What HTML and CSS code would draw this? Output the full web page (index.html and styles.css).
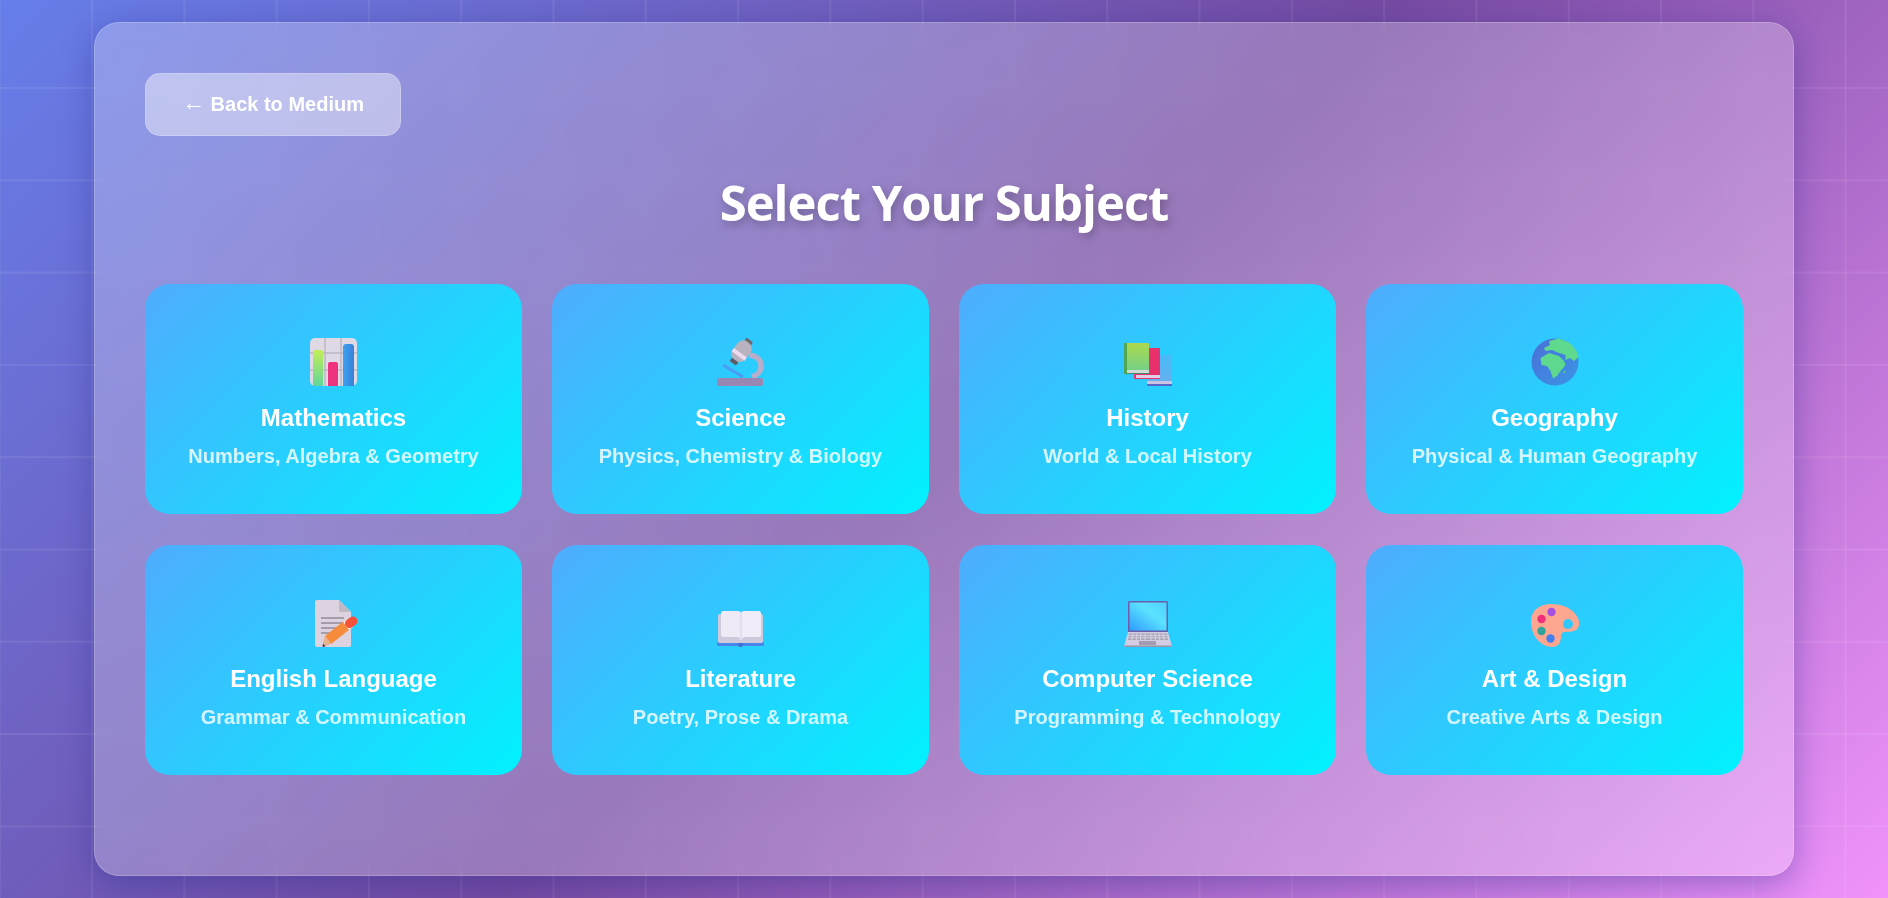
FILE: index.html
```html
<!DOCTYPE html>
<html lang="en">
<head>
    <meta charset="UTF-8">
    <title>Select Your Subject</title>
    <link rel="stylesheet" href="styles.css">
</head>
<body>
    <main class="container">
        <a href="#" class="back-button"><span class="arrow">←</span> Back to Medium</a>
        <h1>Select Your Subject</h1>

        <div class="subject-grid">
            <a href="#" class="subject-card">
                <svg class="subject-icon" viewBox="0 0 48 48">
                    <defs>
                        <linearGradient id="barGreen" x1="0" y1="0" x2="0" y2="1"><stop offset="0" stop-color="#c3ee57"/><stop offset="1" stop-color="#62d69a"/></linearGradient>
                        <linearGradient id="barPink" x1="0" y1="0" x2="0" y2="1"><stop offset="0" stop-color="#f0327c"/><stop offset="1" stop-color="#e8357f"/></linearGradient>
                        <linearGradient id="barBlue" x1="0" y1="0" x2="1" y2="0"><stop offset="0" stop-color="#3aa2f2"/><stop offset="1" stop-color="#3a7fd8"/></linearGradient>
                    </defs>
                    <rect x="0" y="0" width="47" height="48" rx="5" fill="#ded9e4"/>
                    <path d="M15 0V48M31 0V48M0 15H47M0 32H47" stroke="#bcb6c2" stroke-width="1.4" fill="none"/>
                    <path d="M3 14a2 2 0 0 1 2-2h6a2 2 0 0 1 2 2V48H3Z" fill="url(#barGreen)"/>
                    <path d="M18 26a2 2 0 0 1 2-2h6a2 2 0 0 1 2 2V48H18Z" fill="url(#barPink)"/>
                    <path d="M33 9a3 3 0 0 1 3-3h5a3 3 0 0 1 3 3V48H33Z" fill="url(#barBlue)"/>
                </svg>
                <h3>Mathematics</h3>
                <p>Numbers, Algebra &amp; Geometry</p>
            </a>

            <a href="#" class="subject-card">
                <svg class="subject-icon" viewBox="0 0 48 48">
                    <path d="M32 17C46 18 49 34 35 39" stroke="#b9aec9" stroke-width="5.500" fill="none"/>
                    <path d="M6 27L26 39" stroke="#4a9cf4" stroke-width="3"/>
                    <rect x="0" y="40" width="46" height="8" rx="2" fill="#9a86b2"/>
                    <g transform="rotate(36 24 14)">
                        <rect x="20" y="-1" width="8" height="5" rx="1" fill="#6e6a72"/>
                        <rect x="16" y="2" width="16" height="22" rx="7" fill="#b9b3bf"/>
                        <rect x="16" y="15" width="16" height="4" fill="#eedaf2"/>
                        <rect x="20" y="24" width="8" height="4" rx="1" fill="#5e5a66"/>
                    </g>
                </svg>
                <h3>Science</h3>
                <p>Physics, Chemistry &amp; Biology</p>
            </a>

            <a href="#" class="subject-card">
                <svg class="subject-icon" viewBox="0 0 48 48">
                    <defs>
                        <linearGradient id="bookGreen" x1="0" y1="0" x2="0" y2="1"><stop offset="0" stop-color="#add94c"/><stop offset="1" stop-color="#6dd08f"/></linearGradient>
                        <linearGradient id="bookBlue" x1="0" y1="0" x2="0" y2="1"><stop offset="0" stop-color="#48baf8"/><stop offset="1" stop-color="#6aaeee"/></linearGradient>
                    </defs>
                    <rect x="23" y="17" width="25" height="31" rx="1" fill="url(#bookBlue)"/>
                    <rect x="23" y="43" width="25" height="3" fill="#cbc3e2"/>
                    <rect x="23" y="46" width="25" height="2" fill="#5968c8"/>
                    <rect x="10" y="10" width="26" height="31" rx="1" fill="#e8306c"/>
                    <rect x="12" y="37" width="24" height="3" fill="#e0cfe6"/>
                    <rect x="0" y="5" width="25" height="31" rx="1" fill="url(#bookGreen)"/>
                    <rect x="0" y="5" width="3" height="31" fill="#52a552"/>
                    <rect x="3" y="32" width="22" height="3" fill="#d5d8d8"/>
                    <rect x="3" y="35" width="22" height="1" fill="#3f8f6a"/>
                </svg>
                <h3>History</h3>
                <p>World &amp; Local History</p>
            </a>

            <a href="#" class="subject-card">
                <svg class="subject-icon" viewBox="0 0 48 48">
                    <defs>
                        <linearGradient id="sea" x1="0" y1="0" x2="1" y2="1"><stop offset="0" stop-color="#4b6fd8"/><stop offset="1" stop-color="#3a95e6"/></linearGradient>
                    </defs>
                    <circle cx="24" cy="24" r="23.500" fill="url(#sea)"/>
                    <path d="M9.500 20L18 15L28 18L33 23L34.500 27L29.500 33L26 38L22 40.500L19.500 33L16 28L10.500 27Z" fill="#5fd98e"/>
                    <path d="M13 10L19 7L18 3L28 .6L38 4.500C43 9 46.500 13 47.500 19L43 23L39 20L34.500 22L34.500 17L28 15L21 12L14.500 13Z" fill="#5fd98e"/>
                    <circle cx="33.500" cy="34" r="1" fill="#5fd98e"/>
                </svg>
                <h3>Geography</h3>
                <p>Physical &amp; Human Geography</p>
            </a>

            <a href="#" class="subject-card">
                <svg class="subject-icon" viewBox="0 0 48 48">
                    <path d="M7 1H29L41 13V46a2 2 0 0 1-2 2H7a2 2 0 0 1-2-2V3a2 2 0 0 1 2-2Z" fill="#dcd2e0"/>
                    <path d="M29 1L41 13H31a2 2 0 0 1-2-2Z" fill="#bfb7c2"/>
                    <path d="M11 19H34M11 24H34M11 29H30M11 34H22" stroke="#928a98" stroke-width="1.600"/>
                    <path d="M18 41L37 26" stroke="#f58b3b" stroke-width="10"/>
                    <path d="M36 27L40 24" stroke="#f4ece8" stroke-width="10"/>
                    <path d="M39.500 24.500L43 22" stroke="#f4533a" stroke-width="9" stroke-linecap="round"/>
                    <path d="M14.500 37L21 45L12.500 48Z" fill="#e7b48e"/>
                    <path d="M13 44.500L15.500 47.200L12.500 48Z" fill="#4a2a5a"/>
                </svg>
                <h3>English Language</h3>
                <p>Grammar &amp; Communication</p>
            </a>

            <a href="#" class="subject-card">
                <svg class="subject-icon" viewBox="0 0 48 48">
                    <rect x="0" y="43" width="47" height="4" rx="1" fill="#4a86e8"/>
                    <rect x="21" y="43" width="5" height="5" rx="2" fill="#3f6fd0"/>
                    <rect x="1" y="15" width="45" height="29" rx="2" fill="#cfc9dc"/>
                    <path d="M6 12H21C23 12 24 13 24 15V41C23 39 22 38 20 38H6C5 38 4 37 4 36V14C4 13 5 12 6 12Z" fill="#efeaf6"/>
                    <path d="M42 12H27C25 12 24 13 24 15V41C25 39 26 38 28 38H42C43 38 44 37 44 36V14C44 13 43 12 42 12Z" fill="#f1edf8"/>
                    <path d="M24 15V41" stroke="#e3ddee" stroke-width="2.500"/>
                </svg>
                <h3>Literature</h3>
                <p>Poetry, Prose &amp; Drama</p>
            </a>

            <a href="#" class="subject-card">
                <svg class="subject-icon" viewBox="0 0 48 48">
                    <defs>
                        <linearGradient id="laptopScreen" x1="0" y1="1" x2="1" y2="0"><stop offset="0" stop-color="#2e9cff"/><stop offset=".6" stop-color="#5be2ff"/><stop offset="1" stop-color="#4fd0ff"/></linearGradient>
                    </defs>
                    <rect x="4" y="2" width="40" height="32" rx="1.500" fill="#6d5eaa"/>
                    <rect x="5.500" y="3.500" width="37" height="28" fill="url(#laptopScreen)"/>
                    <path d="M4 33H44L47.500 46V48H.5V46Z" fill="#d4cce3"/>
                    <path d="M.5 46.500H47.500V48H.5Z" fill="#9a92a8"/>
                    <path d="M5 34.500H43L44 41H4Z" fill="#aca4b9"/>
                    <path d="M5 36.500H43M4.500 38.800H43.500M9 34.500L8 41M13 34.500L12.500 41M17 34.500L16.500 41M21 34.500V41M27 34.500V41M31 34.500L31.500 41M35 34.500L35.500 41M39 34.500L40 41" stroke="#e0dae9" stroke-width=".8" fill="none"/>
                    <rect x="15" y="42" width="17" height="4" fill="#a39bb0"/>
                </svg>
                <h3>Computer Science</h3>
                <p>Programming &amp; Technology</p>
            </a>

            <a href="#" class="subject-card">
                <svg class="subject-icon" viewBox="0 0 48 48">
                    <path d="M0 21C1 10 10 5 20 5C33 5 45 11 48 22C49 28 46 32 40 32.500C35 33 30 32 30 37C30 44 27 48 21 48C10 48 -1 36 0 21Z" fill="#ffa690"/>
                    <circle cx="37" cy="25" r="5" fill="#2fc8ff"/>
                    <circle cx="20.500" cy="13" r="4.200" fill="#a74fe0"/>
                    <circle cx="10.500" cy="20" r="4.200" fill="#ef2f78"/>
                    <circle cx="10.500" cy="32" r="4.200" fill="#2fa39c"/>
                    <circle cx="19.500" cy="39.500" r="4.200" fill="#3f7ff0"/>
                </svg>
                <h3>Art &amp; Design</h3>
                <p>Creative Arts &amp; Design</p>
            </a>
        </div>
    </main>
</body>
</html>
```

FILE: styles.css
```css
* {
    box-sizing: border-box;
}
html {
    height: 100%;
}
body {
    margin: 0;
    height: 100%;
    padding: 22px 94px;
    overflow: hidden;
    font-family: "Liberation Sans", Arial, sans-serif;
    color: white;
    background-color: #764ba2;
    background-image:
        linear-gradient(to right, rgba(255, 255, 255, 0.08) 2px, transparent 2px),
        linear-gradient(to bottom, rgba(255, 255, 255, 0.08) 2px, transparent 2px),
        linear-gradient(135deg, #667eea 0%, #764ba2 50%, #f093fb 100%);
    background-size: 92.3px 92.3px, 92.3px 92.3px, 100% 100%;
    background-position: -1.3px 0, 0 -5.3px, 0 0;
}
.container {
    height: 100%;
    padding: 50px;
    border: 1px solid rgba(255, 255, 255, 0.2);
    border-radius: 25px;
    background: rgba(255, 255, 255, 0.25);
    backdrop-filter: blur(10px);
    box-shadow: 0 8px 32px rgba(31, 38, 135, 0.37);
}
.back-button {
    display: inline-block;
    width: 256px;
    height: 63px;
    line-height: 60px;
    text-align: center;
    font-size: 20px;
    font-weight: bold;
    color: white;
    text-decoration: none;
    background: rgba(255, 255, 255, 0.42);
    border: 1px solid rgba(255, 255, 255, 0.2);
    border-radius: 15px;
}
.arrow {
    font-family: "Liberation Serif", serif;
    font-size: 23px;
    font-weight: normal;
    line-height: 1;
    vertical-align: 1px;
}
h1 {
    margin: 34px 0 50px;
    text-align: center;
    font-family: "Open Sans", "Noto Sans", sans-serif;
    font-size: 49px;
    line-height: 64px;
    letter-spacing: -1px;
    font-weight: 700;
    text-shadow: 2px 4px 10px rgba(0, 0, 0, 0.25);
}
.subject-grid {
    display: grid;
    grid-template-columns: repeat(4, 1fr);
    gap: 31px 30px;
}
.subject-card {
    display: block;
    height: 230px;
    padding: 54px 10px 0;
    text-align: center;
    color: white;
    text-decoration: none;
    border-radius: 25px;
    background: linear-gradient(135deg, #4facfe 0%, #00f2fe 100%);
}
.subject-icon {
    display: block;
    width: 48px;
    height: 48px;
    margin: 0 auto 18px;
    filter: blur(0.4px);
}
.subject-card h3 {
    margin: 0 0 14px;
    font-size: 24px;
    line-height: 28px;
}
.subject-card p {
    margin: 0;
    font-size: 20px;
    line-height: 21px;
    font-weight: bold;
    opacity: 0.8;
}
```
